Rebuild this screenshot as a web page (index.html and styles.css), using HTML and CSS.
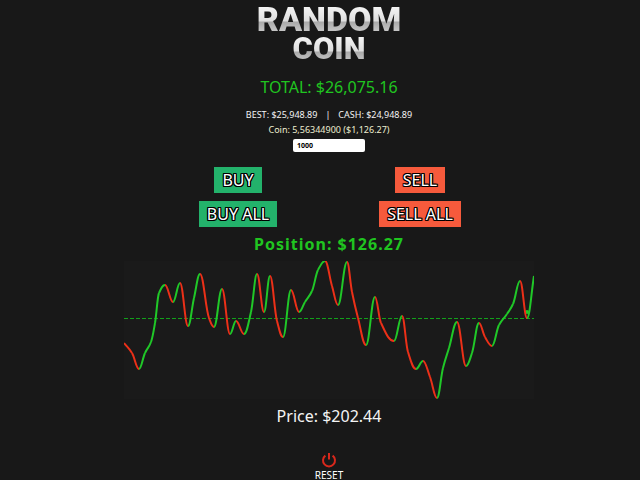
FILE: index.html
```html
<!DOCTYPE html>
<html lang="en">
<head>
    <meta charset="UTF-8">
    <meta name="viewport" content="width=device-width, initial-scale=1.0">
    <title>Random Coin</title>
    <link rel="stylesheet" href="styles.css">
</head>
<body>
    <main class="game">
        <h1 class="logo">
            <span class="logo-top">RANDOM</span>
            <span class="logo-bottom">COIN</span>
        </h1>
        <div class="total">TOTAL: $26,075.16</div>
        <div class="stats">
            <span>BEST: $25,948.89</span>
            <span>|</span>
            <span>CASH: $24,948.89</span>
        </div>
        <label class="coin" for="amount">Coin: 5,56344900 ($1,126.27)</label>
        <input class="amount" type="text" id="amount" value="1000">
        <div class="actions">
            <button class="buy">BUY</button>
            <button class="sell">SELL</button>
            <button class="buy">BUY ALL</button>
            <button class="sell">SELL ALL</button>
        </div>
        <div class="position">Position: $126.27</div>
        <svg class="chart" id="chart" viewBox="0 0 410 138">
            <line class="entry" x1="0" y1="57.5" x2="410" y2="57.5"/>
            <circle class="marker" cx="403" cy="51" r="2"/>
        </svg>
        <div class="price">Price: $202.44</div>
        <button class="reset">
            <svg class="power" viewBox="0 0 16 16">
                <path d="M4.4 3.6A6 6 0 1 0 11.6 3.6M8 1v6.5"/>
            </svg>
            RESET
        </button>
    </main>
    <script src="game.js"></script>
</body>
</html>
```
FILE: styles.css
```css
* {
    box-sizing: border-box;
    margin: 0;
    padding: 0;
}
body {
    min-height: 100vh;
    overflow: hidden;
    background: #181818;
    color: #f4f4f4;
    font-family: "Noto Sans", sans-serif;
    padding-left: 18px;
}
button {
    border: none;
    color: #fff;
    font-family: inherit;
    cursor: pointer;
}
.game {
    display: flex;
    flex-direction: column;
    align-items: center;
    padding-top: 4px;
}
.logo {
    display: flex;
    flex-direction: column;
    align-items: center;
    font-family: Roboto, sans-serif;
    font-weight: 900;
}
.logo span {
    line-height: 30px;
    color: transparent;
    background: linear-gradient(#f8f8f8 0, #dedede 17px, #a9a9a9 18px, #cfcfcf 30px);
    -webkit-background-clip: text;
    background-clip: text;
}
.logo-top {
    font-size: 34px;
}
.logo-bottom {
    font-size: 31px;
}
.total {
    margin-top: 11px;
    font-size: 16px;
    line-height: 24px;
    color: #20c520;
}
.stats {
    display: flex;
    gap: 8px;
    margin-top: 8px;
    font-size: 9px;
    line-height: 16px;
}
.coin {
    font-size: 9px;
    line-height: 14px;
    color: #eeeed0;
}
.amount {
    width: 72px;
    height: 13px;
    margin-top: 2px;
    padding: 0 4px;
    border: none;
    border-radius: 2px;
    background: #fff;
    color: #000;
    font-family: inherit;
    font-size: 7px;
    font-weight: bold;
}
.actions {
    display: grid;
    grid-template-columns: 182px 182px;
    gap: 8px 0;
    justify-items: center;
    margin-top: 15px;
}
.buy, .sell {
    height: 26px;
    padding: 0 8px;
    font-size: 16px;
    text-shadow: 1px 0 #000, -1px 0 #000, 0 1px #000, 0 -1px #000,
        1px 1px #000, -1px -1px #000, 1px -1px #000, -1px 1px #000;
}
.buy {
    background: #23b26b;
}
.sell {
    background: #f65a3c;
}
.position {
    margin-top: 5px;
    font-size: 16px;
    font-weight: bold;
    letter-spacing: 1px;
    line-height: 24px;
    color: #20c520;
}
.chart {
    width: 410px;
    max-width: 100%;
    margin-top: 5px;
    background: #1a1a1a;
}
.chart path {
    fill: none;
    stroke-width: 2;
}
.up {
    stroke: #20c828;
}
.down {
    stroke: #ec3018;
}
.entry {
    stroke: #12a01a;
    stroke-dasharray: 4 2;
}
.marker {
    fill: #20c828;
}
.price {
    margin-top: 5px;
    font-size: 16px;
    line-height: 24px;
}
.reset {
    display: flex;
    flex-direction: column;
    align-items: center;
    margin-top: 24px;
    background: none;
    font-size: 10px;
    line-height: 14px;
}
.power {
    width: 16px;
    height: 16px;
    fill: none;
    stroke: #d8281c;
    stroke-width: 2;
}
```
FILE: game.js
```js
const prices = [
    [0, 82], [8, 92], [15, 108], [21, 92], [27, 81], [31, 62], [35, 32], [41, 24],
    [49, 41], [56, 22], [64, 65], [70, 37], [76, 13], [85, 57], [90, 66], [98, 28],
    [106, 73], [112, 60], [120, 73], [127, 51], [133, 13], [140, 51], [146, 15],
    [153, 60], [159, 76], [167, 29], [175, 51], [181, 41], [188, 30], [194, 9],
    [201, 0], [208, 25], [214, 44], [223, 1], [228, 31], [234, 57], [242, 84],
    [251, 36], [257, 62], [270, 80], [278, 55], [284, 91], [292, 108], [299, 100],
    [306, 116], [313, 137], [319, 107], [325, 87], [333, 61], [342, 105], [348, 92],
    [355, 62], [361, 76], [368, 85], [375, 64], [383, 53], [389, 43], [396, 20],
    [403, 57], [410, 15]
];

function slope(a, b) {
    return (b[1] - a[1]) / (b[0] - a[0]);
}

// flat at turning points, harmonic mean elsewhere
function tangent(i) {
    if (i === 0) return slope(prices[0], prices[1]);
    if (i === prices.length - 1) return slope(prices[i - 1], prices[i]);
    let before = slope(prices[i - 1], prices[i]);
    let after = slope(prices[i], prices[i + 1]);
    return before * after <= 0 ? 0 : 2 * before * after / (before + after);
}

function drawChart() {
    let chart = document.getElementById("chart");
    for (let i = 0; i < prices.length - 1; i++) {
        let [x1, y1] = prices[i];
        let [x2, y2] = prices[i + 1];
        // longer handles round off the peaks
        let reach = (x2 - x1) * 0.4;
        let path = document.createElementNS("http://www.w3.org/2000/svg", "path");
        path.setAttribute("d", `M${x1} ${y1}C${x1 + reach} ${y1 + tangent(i) * reach} ${x2 - reach} ${y2 - tangent(i + 1) * reach} ${x2} ${y2}`);
        path.setAttribute("class", y2 < y1 ? "up" : "down");
        chart.appendChild(path);
    }
}

drawChart();
```
